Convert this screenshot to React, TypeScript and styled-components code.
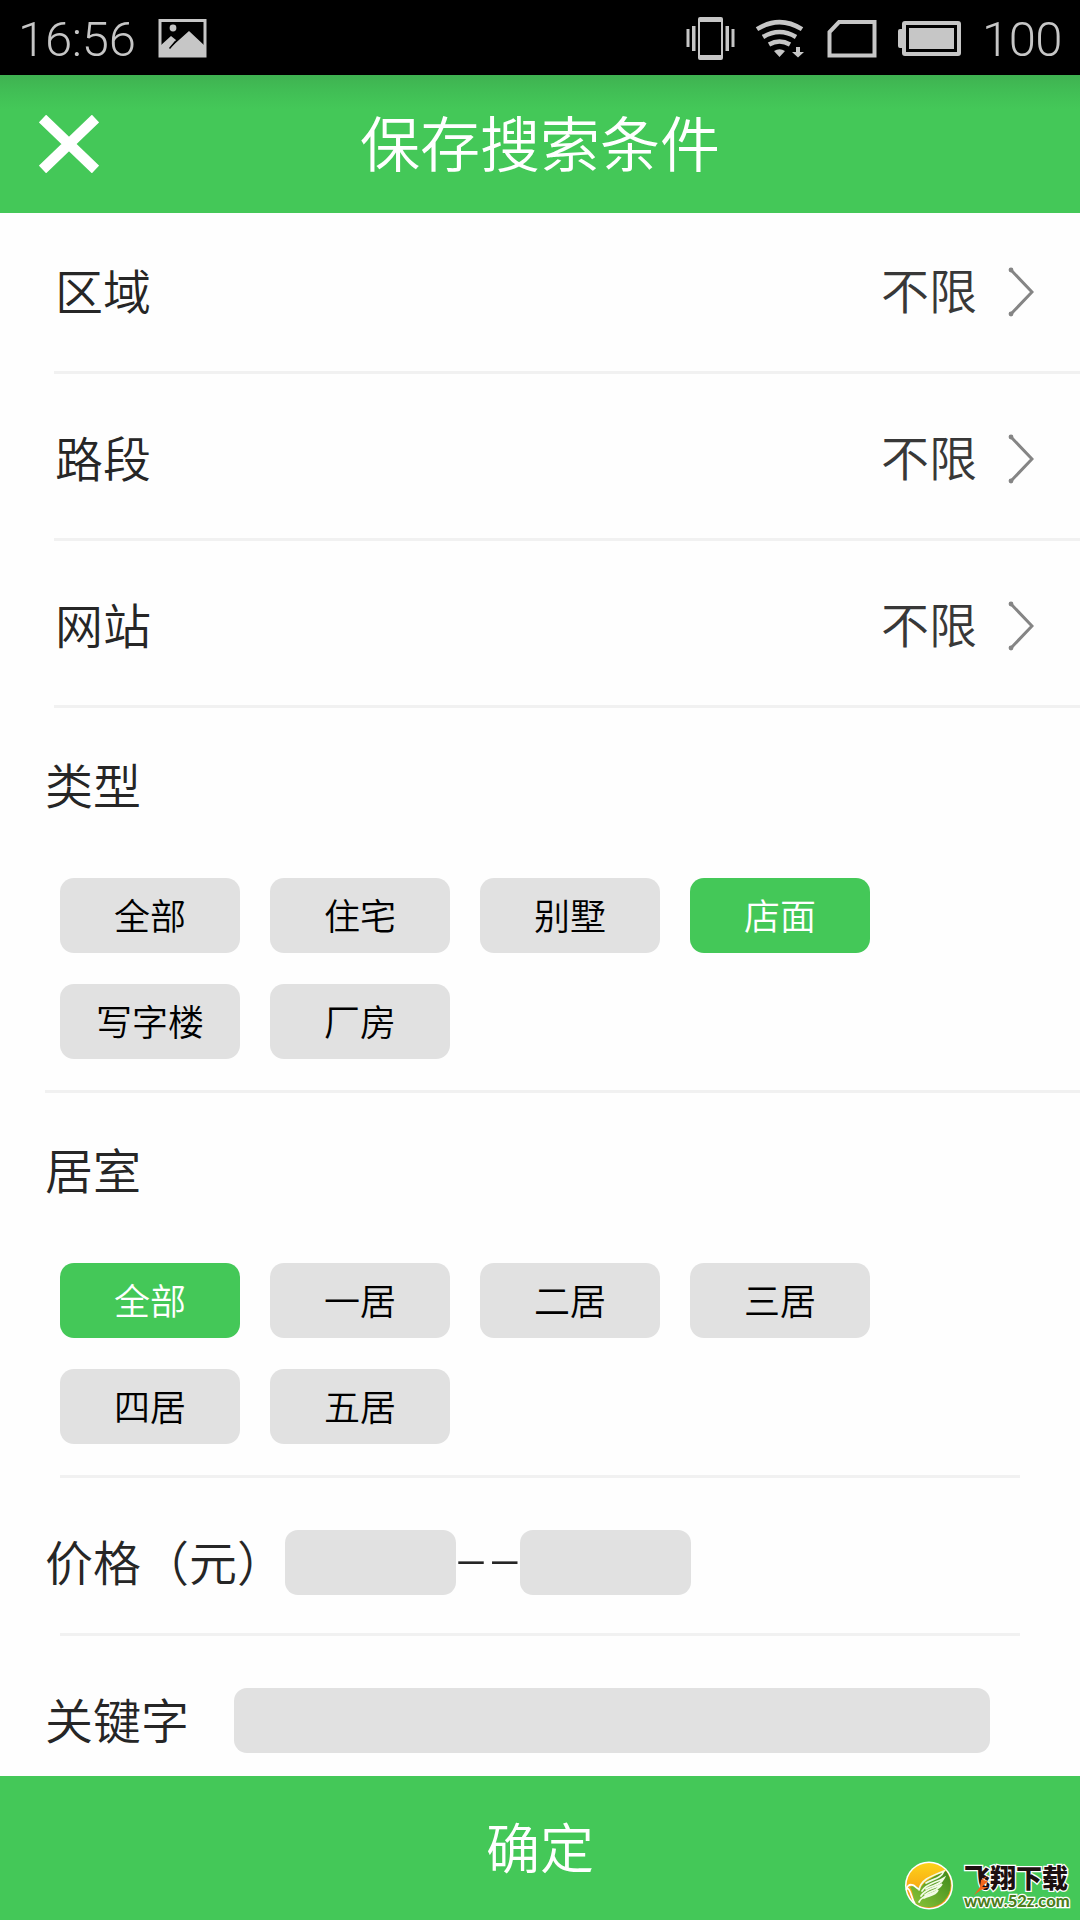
import React, { useState } from "react";
import styled, { createGlobalStyle } from "styled-components";

const GREEN = "#44c858";

const GlobalStyle = createGlobalStyle`
  *, *::before, *::after { box-sizing: border-box; }
  body { margin: 0; background: #fefefe; }
  button, input { font: inherit; border: 0; padding: 0; outline: 0; }
`;

const Screen = styled.div`
  position: relative;
  display: flex;
  flex-direction: column;
  width: 1080px;
  height: 1920px;
  overflow: hidden;
  background: #fefefe;
  color: #262626;
  font-family: Roboto, "Noto Sans CJK SC DemiLight", "Noto Sans CJK SC", sans-serif;
  font-weight: 350;
  font-size: 48px;
  line-height: 1;
`;

const StatusBar = styled.div`
  display: flex;
  align-items: center;
  flex: none;
  height: 75px;
  padding: 3px 18px 0 18px;
  background: #000;
  color: #c6c6c6;
  font-size: 49px;
  font-weight: 300;
`;

const StatusIcons = styled.svg`
  display: block;
  flex: none;
  margin-top: -2px;
`;

const Spacer = styled.div`
  flex: 1;
`;

const Clock = styled.span`
  width: 140px;
  letter-spacing: -0.3px;
`;

const Battery = styled.span`
  margin-left: -4px;
  letter-spacing: -0.5px;
`;

const Header = styled.header`
  display: grid;
  grid-template-columns: 138px 1fr 138px;
  align-items: center;
  flex: none;
  height: 138px;
  background: linear-gradient(#3fb251 0, #41be55 16px, ${GREEN} 34px);
  color: #fff;
`;

const CloseButton = styled.button`
  display: flex;
  align-items: center;
  justify-content: center;
  height: 138px;
  background: none;
`;

const Title = styled.h1`
  margin: 0;
  padding-top: 5px;
  font-size: 60px;
  font-weight: inherit;
  line-height: 133px;
  text-align: center;
`;

const Form = styled.main`
  display: flex;
  flex-direction: column;
  flex: 1;
  min-height: 0;
  margin-top: -6px;
  z-index: 0;
`;

const PickerRow = styled.div`
  display: flex;
  align-items: center;
  flex: none;
  height: 167px;
  margin-left: 54px;
  padding: 6px 46px 0 1px;
  border-bottom: 3px solid #f1f1f1;
`;

const PickerLabel = styled.span`
  padding-top: 3px;
`;

const PickerValue = styled.span`
  margin-left: auto;
  margin-right: 31px;
  padding-top: 2px;
  color: #383838;
`;

const ChipSection = styled.section<{ $ruled?: boolean }>`
  flex: none;
  margin-left: 45px;
  padding-top: 56px;
  padding-bottom: 31px;
  border-bottom: ${(p) => (p.$ruled ? "3px solid #f1f1f1" : "0")};
`;

const SectionTitle = styled.h2`
  margin: 0 0 66px;
  font-size: 48px;
  font-weight: inherit;
  line-height: 48px;
`;

const ChipGrid = styled.div`
  display: grid;
  grid-template-columns: repeat(4, 180px);
  gap: 31px 30px;
  margin-left: 15px;
`;

const Chip = styled.button<{ $active: boolean }>`
  height: 75px;
  padding-top: 5px;
  border-radius: 14px;
  background: ${(p) => (p.$active ? GREEN : "#e1e1e1")};
  color: ${(p) => (p.$active ? "#fff" : "#000")};
  font-size: 36px;
  line-height: 70px;
`;

const Divider = styled.hr`
  flex: none;
  width: 960px;
  height: 3px;
  margin: 0 60px;
  border: 0;
  background: #f1f1f1;
`;

const FieldRow = styled.div`
  display: flex;
  align-items: center;
  flex: none;
  height: 155px;
  padding: 14px 0 0 45px;
`;

const FieldLabel = styled.label<{ $width: number }>`
  width: ${(p) => p.$width}px;
  padding-top: 4px;
  white-space: nowrap;
`;

const Field = styled.input<{ $width: number }>`
  width: ${(p) => p.$width}px;
  height: 65px;
  padding: 0 14px;
  border-radius: 13px;
  background: #e1e1e1;
`;

const Range = styled.span`
  display: flex;
  justify-content: center;
  width: 64px;
  padding-top: 3px;
  font-size: 52px;
  white-space: nowrap;
`;

const Confirm = styled.button`
  flex: none;
  height: 144px;
  padding-top: 5px;
  background: ${GREEN};
  color: #fff;
  font-size: 54px;
`;

const Brand = styled.div`
  position: absolute;
  left: 904px;
  top: 1860px;
  display: flex;
  align-items: center;
  gap: 10px;
`;

const BrandText = styled.div`
  display: flex;
  flex-direction: column;
  padding-top: 6px;
`;

const BrandName = styled.span`
  color: #1c1010;
  font-family: "Liberation Sans", "Noto Sans CJK SC", sans-serif;
  font-weight: 900;
  font-size: 26px;
  line-height: 27px;
  -webkit-text-stroke: 2.5px #fff;
  paint-order: stroke fill;
`;

const BrandUrl = styled.span`
  margin-top: -1px;
  color: #4b7d1b;
  font-family: Lato, sans-serif;
  font-weight: 900;
  font-size: 16.5px;
  line-height: 18px;
  -webkit-text-stroke: 2.5px #fff;
  paint-order: stroke fill;
`;

const BrandAccent = styled.svg`
  position: absolute;
  left: 66px;
  top: 8px;
`;

const PictureIcon = () => (
  <StatusIcons width="50" height="40" viewBox="158 18 50 40">
    <path d="M160 20.500h45V56h-45z" fill="none" stroke="#c6c6c6" strokeWidth="3" />
    <circle cx="173" cy="28" r="3.400" fill="#c6c6c6" />
    <path d="M160 46l11-10 5 4-6 8 19-17 16 15v10h-45z" fill="#c6c6c6" />
    <path d="M169.500 48.500l6-7" stroke="#000" strokeWidth="1.500" />
  </StatusIcons>
);

const SystemIcons = () => (
  <StatusIcons width="302" height="48" viewBox="684 13 302 48" fill="#c6c6c6">
    <path d="M686.500 28h3v18h-3zM692 25h3.500v25H692zM725.500 25h3.500v25h-3.500zM731.500 28h3v18h-3z" />
    <path
      d="M700 16h21a2 2 0 0 1 2 2v39a2 2 0 0 1-2 2h-21a2 2 0 0 1-2-2V18a2 2 0 0 1 2-2zm0 5v33h21V21z"
      fillRule="evenodd"
    />
    <g fill="none" stroke="#c6c6c6" strokeWidth="4.500">
      <path d="M757 28.200Q779.500 14 802 28.200" />
      <path d="M763 36Q779.500 26 796 36" />
      <path d="M769 43.500Q779.500 37.500 790 43.500" />
    </g>
    <path d="M774 50Q779.500 46.500 785 50L779.500 56zM796 46h4v5h4l-6 5.500-6-5.500h4z" />
    <path d="M839 21h35.500v33.500h-45V31z" fill="none" stroke="#c6c6c6" strokeWidth="4" />
    <rect x="904" y="22" width="55" height="31" rx="1" fill="none" stroke="#c6c6c6" strokeWidth="4" />
    <path d="M898 30a2 2 0 0 1 2-2h3v19h-3a2 2 0 0 1-2-2zM909 27h45v21h-45z" />
  </StatusIcons>
);

const CloseIcon = () => (
  <svg width="60" height="58" viewBox="0 0 60 58">
    <path d="M3.500 3.500l53 51M56.500 3.500l-53 51" stroke="#fff" strokeWidth="10.500" />
  </svg>
);

const Chevron = () => (
  <svg width="26" height="50" viewBox="0 0 26 50">
    <path d="M3 3l21 22L3 47" fill="none" stroke="#858585" strokeWidth="3" />
    <circle cx="3" cy="3" r="2.400" fill="#858585" />
    <circle cx="3" cy="47" r="2.400" fill="#858585" />
  </svg>
);

const BrandMark = () => (
  <svg width="50" height="50" viewBox="0 0 50 50">
    <defs>
      <linearGradient id="sun" x1="0" y1="0" x2="0" y2="1">
        <stop offset="0" stopColor="#fdd21a" />
        <stop offset="1" stopColor="#f58a10" />
      </linearGradient>
      <linearGradient id="leaf" x1="1" y1="0" x2="0" y2="1">
        <stop offset="0" stopColor="#3e8a1c" />
        <stop offset="1" stopColor="#8cc63a" />
      </linearGradient>
    </defs>
    <circle cx="25" cy="25.500" r="24" fill="#fff" />
    <circle cx="25" cy="25.500" r="22.500" fill="url(#sun)" />
    <path d="M42 11a22.500 22.500 0 0 1-31 32C9 37 9 32 6 27c4-2 7-1 10 2 4-8 14-13 26-18z" fill="url(#leaf)" />
    <path
      d="M2.500 30c0-4 3-6 6-5 3 .500 4 4 7 4M3 28c4 1 4 10 8 16"
      fill="none"
      stroke="#fff"
      strokeWidth="1.800"
    />
    <g fill="none" stroke="#f2fbe4" strokeWidth="1.700" strokeLinecap="round">
      <path d="M15 30c2-11 13-14 25-19-3 8-12 8-18 12" />
      <path d="M18 31c5-8 14-8 22-13-4 8-12 7-18 11" />
      <path d="M17 36c5-8 13-7 21-12-4 7-11 6-17 11" />
      <path d="M15 42c4-8 13-7 19-12-3 6-9 5-14 8" />
    </g>
  </svg>
);

const PICKERS = ["区域", "路段", "网站"];
const TYPES = ["全部", "住宅", "别墅", "店面", "写字楼", "厂房"];
const ROOMS = ["全部", "一居", "二居", "三居", "四居", "五居"];

type ChipsProps = { options: string[]; value: string; onChange: (v: string) => void };

const Chips = ({ options, value, onChange }: ChipsProps) => (
  <ChipGrid>
    {options.map((o) => (
      <Chip key={o} $active={o === value} onClick={() => onChange(o)}>
        {o}
      </Chip>
    ))}
  </ChipGrid>
);

export default function App() {
  const [type, setType] = useState("店面");
  const [room, setRoom] = useState("全部");

  return (
    <>
      <GlobalStyle />
      <Screen>
        <StatusBar>
          <Clock>16:56</Clock>
          <PictureIcon />
          <Spacer />
          <SystemIcons />
          <Battery>100</Battery>
        </StatusBar>
        <Header>
          <CloseButton>
            <CloseIcon />
          </CloseButton>
          <Title>保存搜索条件</Title>
        </Header>
        <Form>
          {PICKERS.map((label) => (
            <PickerRow key={label}>
              <PickerLabel>{label}</PickerLabel>
              <PickerValue>不限</PickerValue>
              <Chevron />
            </PickerRow>
          ))}
          <ChipSection $ruled>
            <SectionTitle>类型</SectionTitle>
            <Chips options={TYPES} value={type} onChange={setType} />
          </ChipSection>
          <ChipSection>
            <SectionTitle>居室</SectionTitle>
            <Chips options={ROOMS} value={room} onChange={setRoom} />
          </ChipSection>
          <Divider />
          <FieldRow>
            <FieldLabel $width={240}>价格（元）</FieldLabel>
            <Field $width={171} />
            <Range>––</Range>
            <Field $width={171} />
          </FieldRow>
          <Divider />
          <FieldRow>
            <FieldLabel $width={189}>关键字</FieldLabel>
            <Field $width={756} />
          </FieldRow>
        </Form>
        <Confirm>确定</Confirm>
        <Brand>
          <BrandMark />
          <BrandText>
            <BrandName>飞翔下载</BrandName>
            <BrandUrl>www.52z.com</BrandUrl>
          </BrandText>
          <BrandAccent width="26" height="28" viewBox="0 0 26 28">
            <path d="M20 6l-7 6 5 1-6 6 7 0-8 3-7 5 6-8 1-7z" fill="#f4661b" />
          </BrandAccent>
        </Brand>
      </Screen>
    </>
  );
}
